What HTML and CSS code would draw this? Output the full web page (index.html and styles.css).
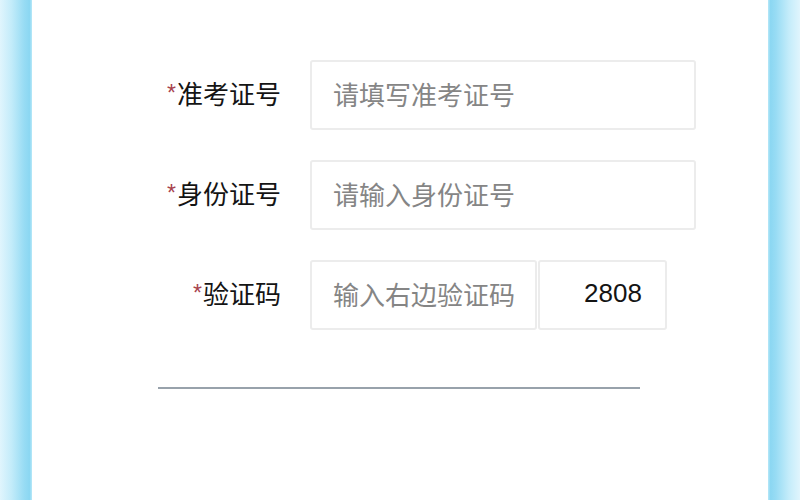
FILE: index.html
```html
<!DOCTYPE html>
<html lang="zh-CN">

<head>
  <meta charset="UTF-8">
  <meta name="viewport" content="width=device-width, initial-scale=1.0">
  <title>成绩查询</title>
  <link rel="stylesheet" href="styles.css">
</head>

<body>
  <div class="page">
    <div class="edge edge-left"></div>
    <main class="card">
      <form class="query-form">
        <div class="row">
          <label class="label" for="exam-no"><span class="star">*</span>准考证号</label>
          <input class="field" id="exam-no" type="text" placeholder="请填写准考证号">
        </div>
        <div class="row">
          <label class="label" for="id-no"><span class="star">*</span>身份证号</label>
          <input class="field" id="id-no" type="text" placeholder="请输入身份证号">
        </div>
        <div class="row">
          <label class="label" for="captcha"><span class="star">*</span>验证码</label>
          <div class="captcha-group">
            <input class="field field-captcha" id="captcha" type="text" placeholder="输入右边验证码">
            <div class="captcha-code">2808</div>
          </div>
        </div>
      </form>
      <div class="divider"></div>
    </main>
    <div class="edge edge-right"></div>
  </div>
</body>

</html>
```

FILE: styles.css
```css
html,
body {
  margin: 0;
  padding: 0;
  height: 100%;
}

body {
  font-family: "Noto Sans CJK SC", "Noto Sans", sans-serif;
  background-color: #fff;
  overflow: hidden;
}

.page {
  display: flex;
  height: 500px;
}

/* light blue side borders */
.edge {
  width: 32px;
  flex: none;
}

.edge-left {
  background: linear-gradient(to right, #e0f5fd 0%, #c4ecfa 35%, #98dcf4 75%, #8bd7f2 92%, #b8e8f8 100%);
}

.edge-right {
  background: linear-gradient(to left, #e0f5fd 0%, #c4ecfa 35%, #98dcf4 75%, #8bd7f2 92%, #b8e8f8 100%);
}

.card {
  flex: 1;
  background-color: #fff;
  padding: 60px 0 0 126px;
}

.query-form {
  display: flex;
  flex-direction: column;
  gap: 30px;
}

.row {
  display: flex;
  align-items: center;
  gap: 29px;
}

.label {
  width: 123px;
  text-align: right;
  font-size: 26px;
  color: #141414;
  white-space: nowrap;
  line-height: 1;
  padding-bottom: 4px;
}

.star {
  color: #a8434e;
  font-size: 23px;
  font-family: "Liberation Sans", sans-serif;
  vertical-align: 3px;
  margin-right: 1px;
}

.field {
  box-sizing: border-box;
  width: 386px;
  height: 70px;
  padding: 0 0 4px 21px;
  border: 2px solid #ececec;
  border-radius: 3px;
  background: #fff;
  font-family: "Noto Sans CJK SC", "Noto Sans", sans-serif;
  font-size: 26px;
  color: #222;
  outline: none;
}

.field::placeholder {
  color: #858585;
}

.captcha-group {
  display: flex;
  gap: 1px;
}

.field-captcha {
  width: 227px;
}

.captcha-code {
  box-sizing: border-box;
  width: 129px;
  height: 70px;
  border: 2px solid #ececec;
  border-radius: 3px;
  display: flex;
  align-items: center;
  padding: 0 0 3px 44px;
  font-family: "Liberation Sans", Arial, sans-serif;
  font-size: 26px;
  color: #141414;
}

.divider {
  width: 482px;
  height: 2px;
  background-color: #98a2ab;
  margin: 57px 0 0 0;
}
```
